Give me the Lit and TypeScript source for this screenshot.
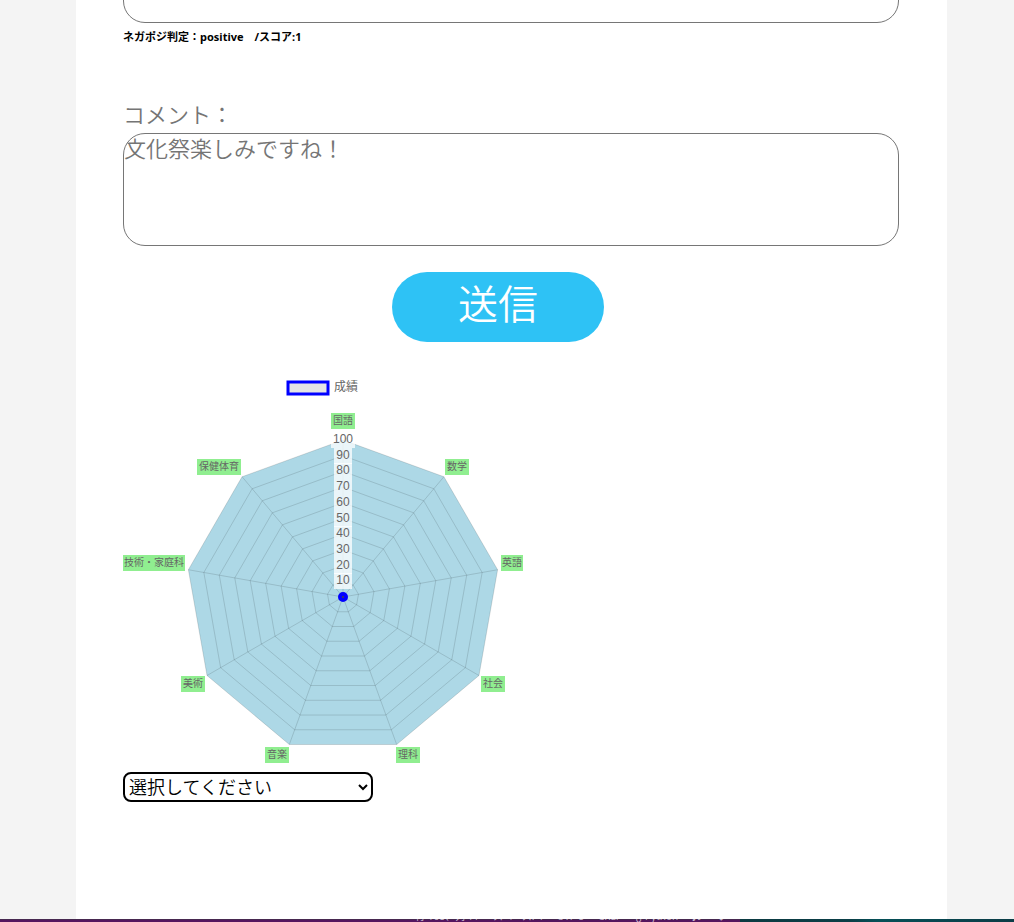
import { LitElement, html, svg, css } from "lit";
import { customElement } from "lit/decorators.js";

interface Subject {
  name: string;
  x: number;
  y: number;
  width: number;
}

const CENTER = { x: 220, y: 221 };
const RADIUS = 157;
const STEPS = [10, 20, 30, 40, 50, 60, 70, 80, 90, 100];

const SUBJECTS: Subject[] = [
  { name: "国語", x: 208, y: 37, width: 24 },
  { name: "数学", x: 322, y: 83, width: 24 },
  { name: "英語", x: 378, y: 179, width: 22 },
  { name: "社会", x: 358, y: 300, width: 24 },
  { name: "理科", x: 273, y: 371, width: 24 },
  { name: "音楽", x: 142, y: 371, width: 24 },
  { name: "美術", x: 58, y: 300, width: 24 },
  { name: "技術・家庭科", x: 0, y: 179, width: 62 },
  { name: "保健体育", x: 74, y: 83, width: 44 },
];

function vertex(index: number, value: number) {
  const angle = (index / SUBJECTS.length) * Math.PI * 2;
  const r = (RADIUS * value) / 100;
  return {
    x: CENTER.x + r * Math.sin(angle),
    y: CENTER.y - r * Math.cos(angle),
  };
}

function ring(value: number) {
  return SUBJECTS.map((_, i) => {
    const p = vertex(i, value);
    return `${p.x.toFixed(2)},${p.y.toFixed(2)}`;
  }).join(" ");
}

@customElement("score-radar")
export class ScoreRadar extends LitElement {
  static styles = css`
    :host {
      display: block;
    }
    svg {
      display: block;
      width: 402px;
      max-width: 100%;
      height: auto;
      overflow: visible;
      font-family: "Liberation Sans", "Noto Sans CJK JP", sans-serif;
    }
    .area {
      fill: #add8e6;
    }
    .grid {
      fill: none;
      stroke: rgba(0, 0, 0, 0.13);
      stroke-width: 1;
    }
    .plate {
      fill: rgba(255, 255, 255, 0.75);
    }
    .tick {
      font-size: 12px;
      fill: #666;
      text-anchor: middle;
    }
    .tag {
      fill: #90ee90;
    }
    .subject {
      font-size: 10px;
      fill: #666;
      text-anchor: middle;
    }
    .key {
      fill: rgba(0, 0, 0, 0.1);
      stroke: #00f;
      stroke-width: 3;
    }
    .legend {
      font-size: 12px;
      fill: #666;
    }
    .point {
      fill: #444;
      stroke: #00f;
      stroke-width: 4;
    }
  `;

  render() {
    return html`
      <svg viewBox="0 0 402 390" role="img" aria-label="成績">
        <rect class="key" x="165" y="6" width="40" height="12"></rect>
        <text class="legend" x="211" y="15">成績</text>
        <polygon class="area" points=${ring(100)}></polygon>
        ${STEPS.map((v) => svg`<polygon class="grid" points=${ring(v)}></polygon>`)}
        ${SUBJECTS.map((s, i) => {
          const p = vertex(i, 100);
          return svg`
            <line class="grid" x1=${CENTER.x} y1=${CENTER.y} x2=${p.x} y2=${p.y}></line>
            <rect class="tag" x=${s.x} y=${s.y} width=${s.width} height="16"></rect>
            <text class="subject" x=${s.x + s.width / 2} y=${s.y + 11}>${s.name}</text>`;
        })}
        ${STEPS.map((v) => {
          const y = Math.round(vertex(0, v).y);
          const w = v === 100 ? 24 : 18;
          return svg`
            <rect class="plate" x=${CENTER.x - w / 2} y=${y - 8} width=${w} height="16"></rect>
            <text class="tick" x=${CENTER.x} y=${y + 3}>${v}</text>`;
        })}
        <circle class="point" cx=${CENTER.x} cy=${CENTER.y} r="3"></circle>
      </svg>
    `;
  }
}

@customElement("app-root")
export class AppRoot extends LitElement {
  static styles = css`
    :host {
      display: flex;
      flex-direction: column;
      height: 100vh;
      overflow: hidden;
      background: #f4f4f4;
      font-family: "Noto Sans", "Noto Sans CJK JP", sans-serif;
    }
    .page {
      flex: 1;
      min-height: 0;
      overflow: hidden;
      box-sizing: border-box;
      margin: 0 67px 0 76px;
      padding: 0 48px 0 47px;
      background: #fff;
    }
    .box {
      display: block;
      box-sizing: border-box;
      width: 100%;
      height: 113px;
      margin: 0;
      padding: 0;
      border: 1px solid #767676;
      border-radius: 22px;
      background: #fff;
      color: #757575;
      font-family: inherit;
      font-weight: 350;
      font-size: 22px;
      line-height: 28px;
      resize: none;
      outline: none;
      overflow: hidden;
    }
    .box::placeholder {
      color: #757575;
      opacity: 1;
    }
    .previous {
      margin-top: -90px;
    }
    .verdict {
      margin: 4px 0 52px;
      color: #000;
      font-size: 11px;
      line-height: 20px;
      font-weight: 700;
      white-space: pre;
    }
    .label {
      display: block;
      padding-bottom: 4px;
      color: #757575;
      font-weight: 350;
      font-size: 22px;
      line-height: 30px;
    }
    .send {
      display: block;
      width: 212px;
      height: 70px;
      margin: 26px auto 34px 269px;
      padding: 0 0 6px;
      border: 0;
      border-radius: 35px;
      background: #2ec2f5;
      color: #fff;
      font-family: inherit;
      font-weight: 350;
      font-size: 40px;
      line-height: 60px;
    }
    .choice {
      display: block;
      box-sizing: border-box;
      width: 250px;
      height: 30px;
      margin-top: 6px;
      padding: 0;
      border: 2px solid #000;
      border-radius: 8px;
      background: #fff;
      color: #000;
      font-family: inherit;
      font-weight: 350;
      font-size: 18px;
    }
    .status {
      display: flex;
      align-items: flex-end;
      justify-content: flex-end;
      gap: 14px;
      height: 3px;
      overflow: hidden;
      background: linear-gradient(#472850 1px, #55155f 1px);
      color: #c9b6cc;
      font-size: 10px;
      line-height: 12px;
      white-space: nowrap;
    }
    .status-end {
      width: 27%;
      height: 3px;
      background: linear-gradient(90deg, #0c3a42, #0b3f47 40%, #065058 50%, #0b3c46);
    }
  `;

  render() {
    return html`
      <main class="page">
        <textarea class="box previous" aria-label="本文"></textarea>
        <p class="verdict">ネガポジ判定：positive　/スコア:1</p>
        <label class="label" for="comment">コメント：</label>
        <textarea class="box" id="comment" placeholder="文化祭楽しみですね！"></textarea>
        <button class="send" type="button">送信</button>
        <score-radar></score-radar>
        <select class="choice" aria-label="科目">
          <option>選択してください</option>
        </select>
      </main>
      <footer class="status">
        <span>行 168、列 11</span>
        <span>スペース: 4</span>
        <span>UTF-8</span>
        <span>CRLF</span>
        <span>{} Python</span>
        <span>♫</span>
        <span>◆</span>
        <span class="status-end"></span>
      </footer>
    `;
  }
}
